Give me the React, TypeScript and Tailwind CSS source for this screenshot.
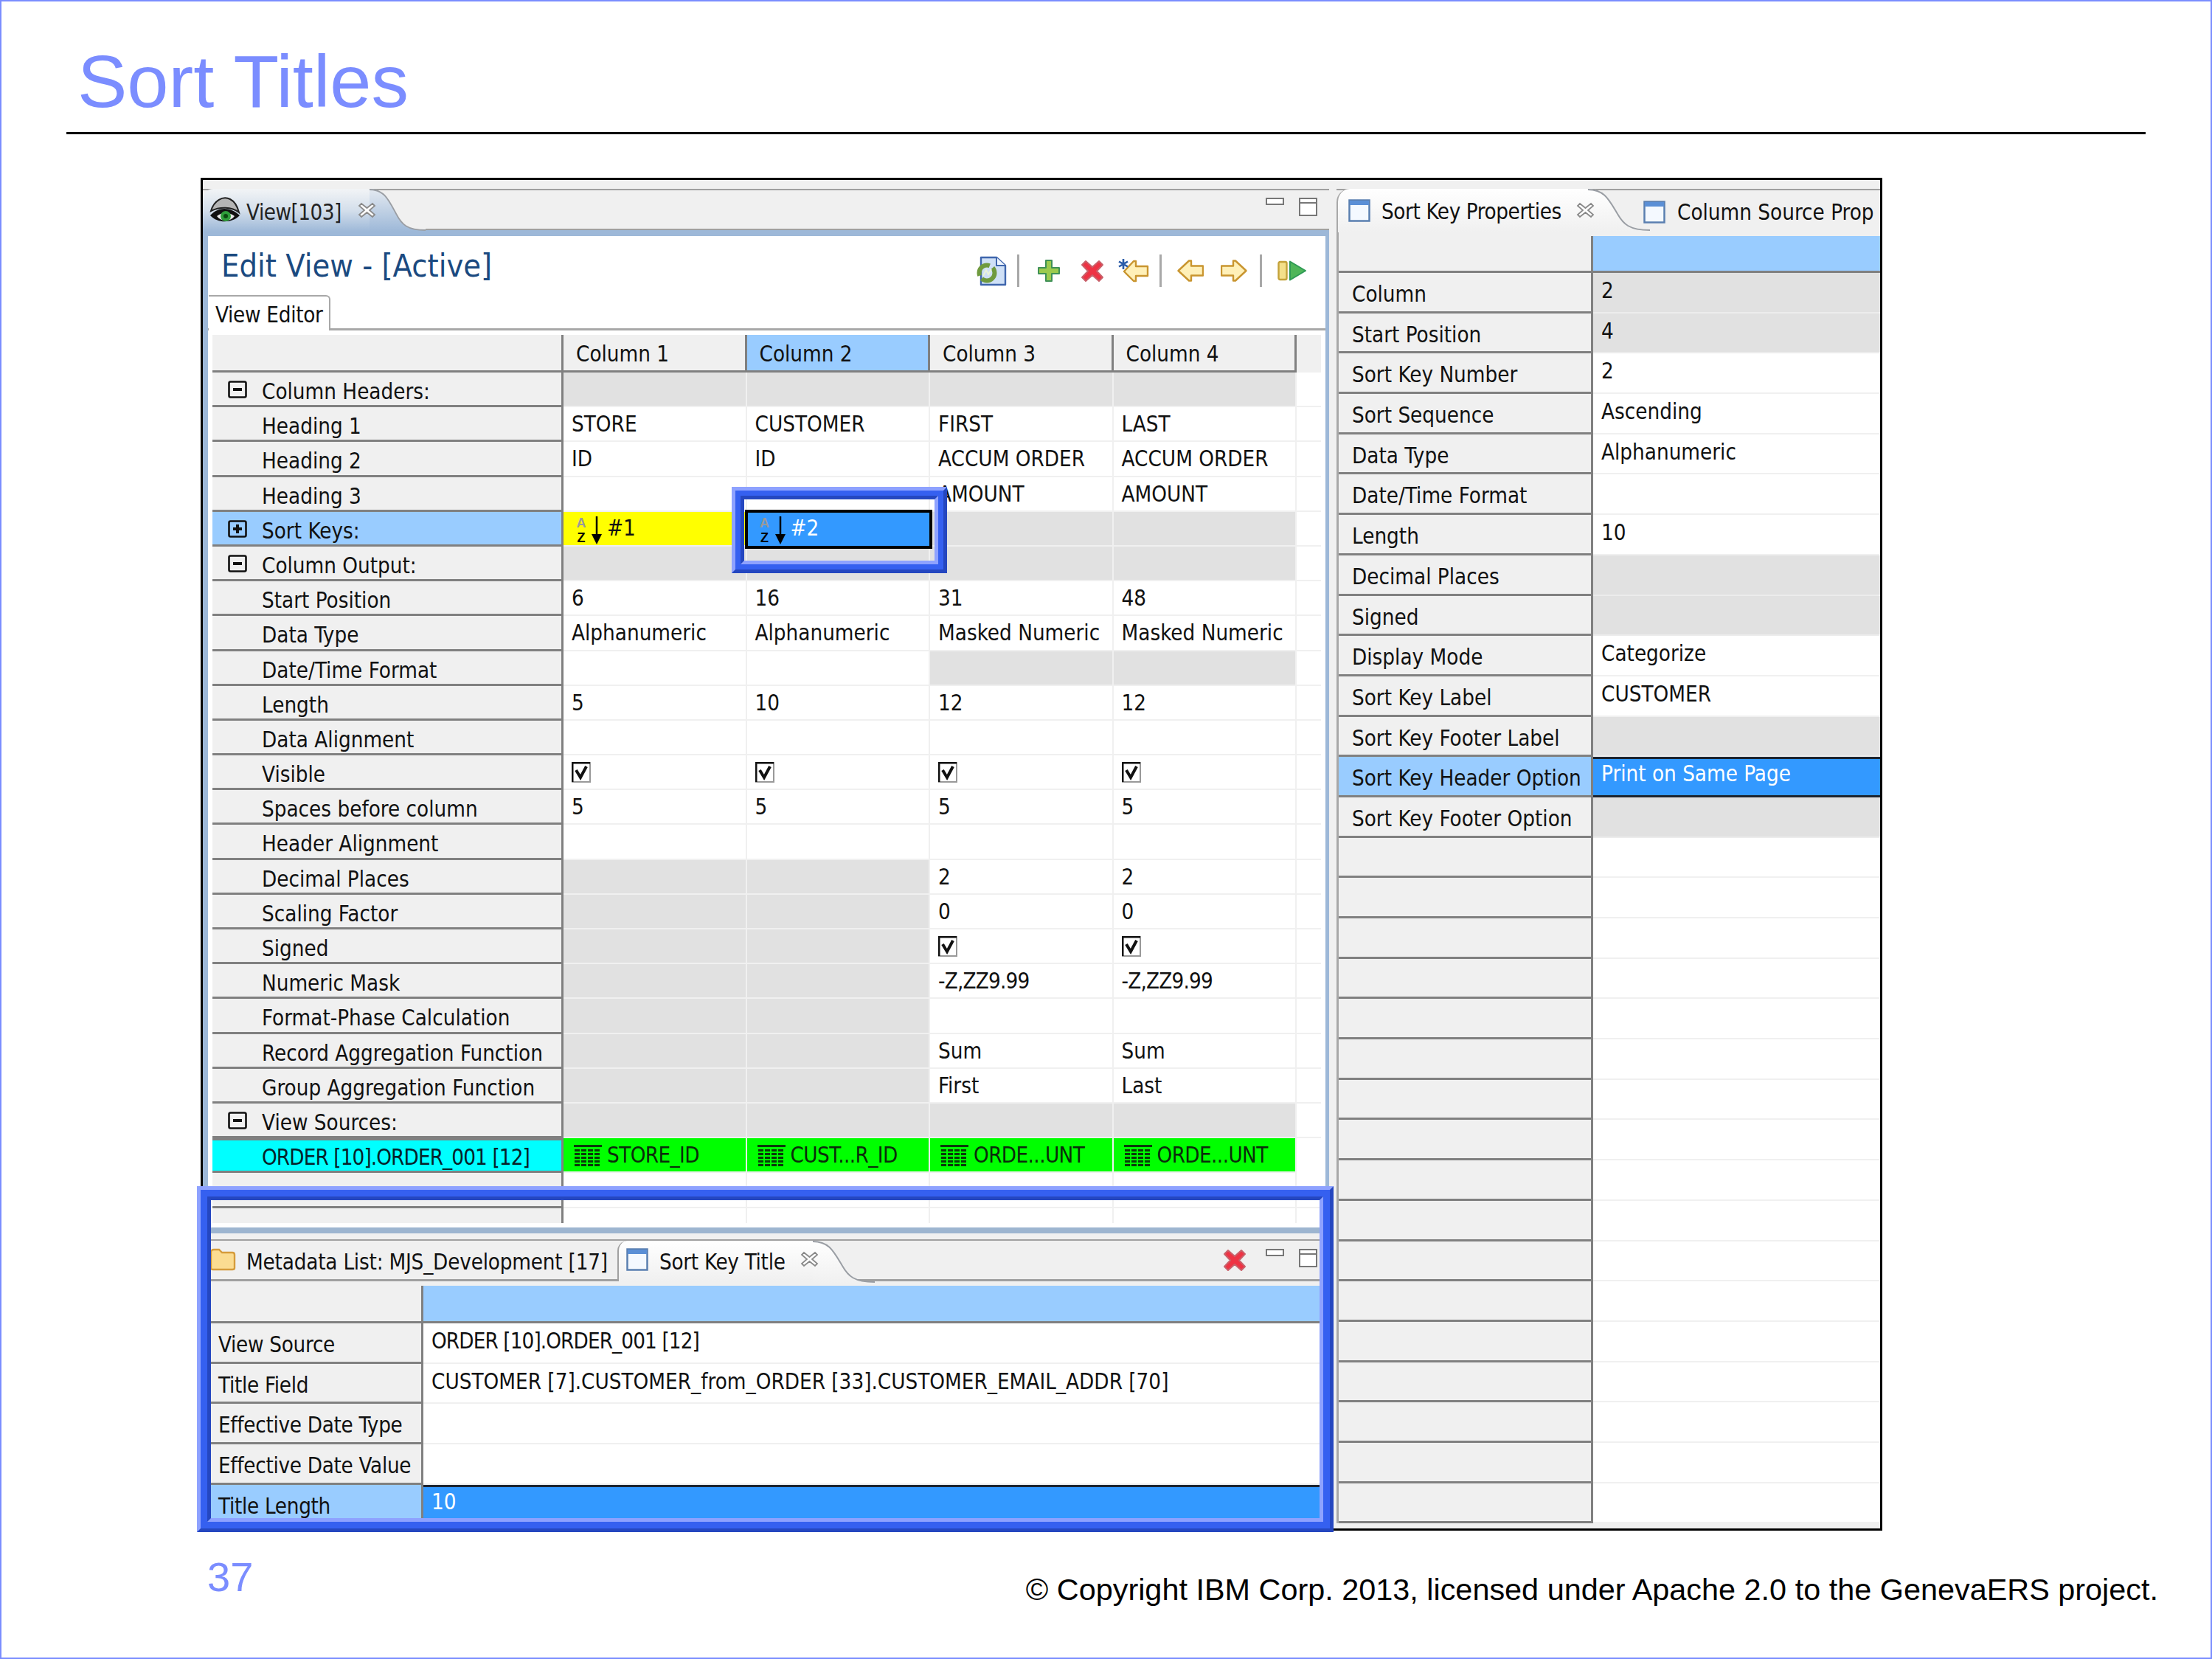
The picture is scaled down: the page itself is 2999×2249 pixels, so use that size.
import React from "react";

const GRAY = "~";
const CHECK = "[x]";

type RowData = { label: string; tree?: "minus" | "plus"; cells: string[] };

const rows: RowData[] = [
  { label: "Column Headers:", tree: "minus", cells: [GRAY, GRAY, GRAY, GRAY] },
  { label: "Heading 1", cells: ["STORE", "CUSTOMER", "FIRST", "LAST"] },
  { label: "Heading 2", cells: ["ID", "ID", "ACCUM ORDER", "ACCUM ORDER"] },
  { label: "Heading 3", cells: ["", "", "AMOUNT", "AMOUNT"] },
  { label: "Sort Keys:", tree: "plus", cells: ["#1", "#2", GRAY, GRAY] },
  { label: "Column Output:", tree: "minus", cells: [GRAY, GRAY, GRAY, GRAY] },
  { label: "Start Position", cells: ["6", "16", "31", "48"] },
  { label: "Data Type", cells: ["Alphanumeric", "Alphanumeric", "Masked Numeric", "Masked Numeric"] },
  { label: "Date/Time Format", cells: ["", "", GRAY, GRAY] },
  { label: "Length", cells: ["5", "10", "12", "12"] },
  { label: "Data Alignment", cells: ["", "", "", ""] },
  { label: "Visible", cells: [CHECK, CHECK, CHECK, CHECK] },
  { label: "Spaces before column", cells: ["5", "5", "5", "5"] },
  { label: "Header Alignment", cells: ["", "", "", ""] },
  { label: "Decimal Places", cells: [GRAY, GRAY, "2", "2"] },
  { label: "Scaling Factor", cells: [GRAY, GRAY, "0", "0"] },
  { label: "Signed", cells: [GRAY, GRAY, CHECK, CHECK] },
  { label: "Numeric Mask", cells: [GRAY, GRAY, "-Z,ZZ9.99", "-Z,ZZ9.99"] },
  { label: "Format-Phase Calculation", cells: [GRAY, GRAY, "", ""] },
  { label: "Record Aggregation Function", cells: [GRAY, GRAY, "Sum", "Sum"] },
  { label: "Group Aggregation Function", cells: [GRAY, GRAY, "First", "Last"] },
  { label: "View Sources:", tree: "minus", cells: [GRAY, GRAY, GRAY, GRAY] },
];

const sourceCells = ["STORE_ID", "CUST...R_ID", "ORDE...UNT", "ORDE...UNT"];

const sortKeyProps: [string, string][] = [
  ["Column", "~2"],
  ["Start Position", "~4"],
  ["Sort Key Number", "2"],
  ["Sort Sequence", "Ascending"],
  ["Data Type", "Alphanumeric"],
  ["Date/Time Format", ""],
  ["Length", "10"],
  ["Decimal Places", "~"],
  ["Signed", "~"],
  ["Display Mode", "Categorize"],
  ["Sort Key Label", "CUSTOMER"],
  ["Sort Key Footer Label", "~"],
  ["Sort Key Header Option", "*Print on Same Page"],
  ["Sort Key Footer Option", "~"],
  ...[...Array(17)].map((): [string, string] => ["", ""]),
];

const titleProps: [string, string][] = [
  ["View Source", "ORDER [10].ORDER_001 [12]"],
  ["Title Field", "CUSTOMER [7].CUSTOMER_from_ORDER [33].CUSTOMER_EMAIL_ADDR [70]"],
  ["Effective Date Type", ""],
  ["Effective Date Value", ""],
  ["Title Length", "*10"],
];

const TreeIcon = ({ kind }: { kind: "minus" | "plus" }) => (
  <svg width="26" height="24" viewBox="0 0 26 24" className="ml-[21px] mr-[20px] shrink-0">
    <rect x="1.5" y="1.5" width="23" height="21" rx="2" fill="none" stroke="#111" strokeWidth="2.6" />
    <rect x="7" y="10" width="12" height="4" fill="#111" />
    {kind === "plus" && <rect x="11" y="6" width="4" height="12" fill="#111" />}
  </svg>
);

const Checkbox = () => (
  <svg width="26" height="28" viewBox="0 0 26 28" className="mt-[1px]">
    <rect x="1" y="1" width="24" height="26" fill="#fff" stroke="#999" strokeWidth="2" />
    <path d="M1 27V1H25" fill="none" stroke="#111" strokeWidth="3" />
    <path d="M6 11 L12 21 L20 6" fill="none" stroke="#111" strokeWidth="4" />
  </svg>
);

const SortIcon = () => (
  <span className="flex items-start shrink-0 -mt-[2px]">
    <span className="flex flex-col w-[20px] items-center font-['Liberation_Sans',sans-serif] font-bold text-[18px] leading-[20.2px] [font-stretch:normal]">
      <span className="text-[#9a9a9a]">A</span>
      <span className="text-black">Z</span>
    </span>
    <svg width="16" height="38" viewBox="0 0 16 38" className="ml-[3px] mt-[1px] shrink-0">
      <path d="M8 0V28" stroke="#000" strokeWidth="2.5" />
      <path d="M1 24H15L8 38Z" fill="#000" />
    </svg>
  </span>
);

const TableIcon = () => (
  <svg width="38" height="30" viewBox="0 0 38 30" className="shrink-0">
    <rect x="0" y="0" width="38" height="3" fill="#0a3a0a" />
    {[6, 11, 16, 21, 26].map((y) => (
      <path key={y} d={`M1 ${y + 1.5}H37`} stroke="#0a3a0a" strokeWidth="3" strokeDasharray="7 2" />
    ))}
  </svg>
);

const EyeIcon = () => (
  <svg width="42" height="42" viewBox="0 0 42 42" className="shrink-0">
    <path d="M2 22 C6 8 18 1 28 6 C34 9 38 16 40 24 C30 16 14 16 2 22Z" fill="#b5b5b5" stroke="#222" strokeWidth="2" />
    <path d="M1 28 C12 16 28 16 41 28 C32 38 12 40 1 28Z" fill="#111" />
    <path d="M10 29 C18 23 26 23 34 29 C28 37 16 37 10 29Z" fill="#e8e8e8" />
    <circle cx="22" cy="29" r="7" fill="#2f9e3a" />
    <circle cx="22" cy="29" r="3" fill="#0c4a12" />
  </svg>
);

const CloseIcon = () => (
  <svg width="25" height="24" viewBox="0 0 25 24" className="shrink-0">
    <path d="M5 3 L12.5 9 L20 3 L23 6 L16 12 L23 18 L20 21 L12.5 15 L5 21 L2 18 L9 12 L2 6Z" fill="#fff" stroke="#8a8a8a" strokeWidth="1.8" />
  </svg>
);

const WindowIcon = () => (
  <svg width="30" height="31" viewBox="0 0 30 31" className="shrink-0">
    <rect x="1.5" y="1.5" width="27" height="28" fill="#f4f9ff" stroke="#5a7fb0" strokeWidth="2.5" />
    <rect x="2" y="2" width="26" height="6" fill="#5a8fd6" />
  </svg>
);

const FolderIcon = () => (
  <svg width="36" height="31" viewBox="0 0 36 31" className="shrink-0">
    <path d="M2 6 Q2 2 6 2 H13 L17 6 H31 Q34 6 34 9 V27 Q34 29 31 29 H5 Q2 29 2 27Z" fill="#fbdc91" stroke="#d59c3c" strokeWidth="2.4" />
  </svg>
);

const MinMax = () => (
  <div className="flex items-start gap-[20px]">
    <svg width="25" height="10" viewBox="0 0 25 10">
      <rect x="1" y="1" width="23" height="8" fill="#fff" stroke="#777" strokeWidth="2" />
    </svg>
    <svg width="25" height="25" viewBox="0 0 25 25">
      <rect x="1" y="1" width="23" height="23" fill="#fff" stroke="#777" strokeWidth="2" />
      <path d="M1 7H24" stroke="#777" strokeWidth="2" />
    </svg>
  </div>
);

const RedX = () => (
  <svg width="32" height="31" viewBox="0 0 32 31" className="shrink-0">
    <path d="M7 2 L16 10 L25 2 L30 7 L22 15.5 L30 24 L25 29 L16 21 L7 29 L2 24 L10 15.5 L2 7Z" fill="#ee3344" stroke="#c9606a" strokeWidth="2" strokeLinejoin="round" />
  </svg>
);

const PlusIcon = () => (
  <svg width="30" height="30" viewBox="0 0 30 30" className="shrink-0">
    <path d="M11 1H19V11H29V19H19V29H11V19H1V11H11Z" fill="#9ccb4e" stroke="#3f9157" strokeWidth="2" strokeLinejoin="round" />
  </svg>
);

const YellowLeft = () => (
  <svg width="36" height="30" viewBox="0 0 36 30" className="shrink-0">
    <path d="M1.5 15 L16 1.5 H19 V8.5 H35 V21.5 H19 V28.5 H16Z" fill="#fff0b8" stroke="#c9952f" strokeWidth="2.4" strokeLinejoin="round" />
  </svg>
);

const YellowRight = () => (
  <svg width="36" height="30" viewBox="0 0 36 30" className="shrink-0">
    <path d="M34.5 15 L20 1.5 H17 V8.5 H1 V21.5 H17 V28.5 H20Z" fill="#fff0b8" stroke="#c9952f" strokeWidth="2.4" strokeLinejoin="round" />
  </svg>
);

const StarArrow = () => (
  <svg width="42" height="32" viewBox="0 0 42 32" className="shrink-0">
    <path d="M8 17 L21 3 H24 V10 H40 V23 H24 V30 H21Z" fill="#fff0b8" stroke="#c9952f" strokeWidth="2.4" strokeLinejoin="round" />
    <path d="M7 0V14M1 3.5L13 10.5M13 3.5L1 10.5" stroke="#2b5ca8" strokeWidth="2.6" />
  </svg>
);

const RunIcon = () => (
  <svg width="39" height="28" viewBox="0 0 39 28" className="shrink-0">
    <rect x="1.5" y="2" width="11" height="24" rx="2" fill="#f4e08a" stroke="#c4a23a" strokeWidth="2.4" />
    <path d="M17 1.5 L38 14 L17 26.5Z" fill="#4fb65a" stroke="#2f9a55" strokeWidth="2" strokeLinejoin="round" />
  </svg>
);

const DocSync = () => (
  <svg width="41" height="41" viewBox="0 0 41 41" className="shrink-0">
    <path d="M6 2 H27 L39 13 V39 H6Z" fill="#cfe0f6" stroke="#3f66ad" strokeWidth="2.4" strokeLinejoin="round" />
    <path d="M27 2 V13 H39" fill="#edf4fd" stroke="#3f66ad" strokeWidth="2" />
    <circle cx="14" cy="23" r="10.5" fill="none" stroke="#6f9a3e" strokeWidth="6" strokeDasharray="24 5" />
    <path d="M9 27 L13 19 L16 25 L20 18" fill="none" stroke="#eaf4d8" strokeWidth="2" />
  </svg>
);

const ToolSep = () => <div className="w-[3px] h-[44px] bg-[#a8a8a8] shrink-0" />;

const TabCurve = ({ id, from, to, width }: { id: string; from: string; to: string; width: number }) => (
  <svg width={width} height="58" viewBox="0 0 84 58" preserveAspectRatio="none" className="shrink-0">
    <defs>
      <linearGradient id={id} x1="0" y1="0" x2="0" y2="1">
        <stop offset="0" stopColor={from} />
        <stop offset="1" stopColor={to} />
      </linearGradient>
    </defs>
    <path d="M0 0 C22 1 28 14 40 34 C48 48 56 56 84 56 L84 58 L0 58Z" fill={`url(#${id})`} stroke="none" />
    <path d="M0 1 C22 1 28 14 40 34 C48 48 56 56 84 56" fill="none" stroke="#9a9ea4" strokeWidth="2" />
  </svg>
);

const Frame = ({ className, mid }: { className: string; mid: string }) => (
  <div className={`absolute z-20 border-[5px] border-t-[#8ea2ff] border-l-[#8ea2ff] border-r-[#2547c0] border-b-[#2547c0] ${className}`}>
    <div className={`h-full border-[#3560f0] ${mid}`}>
      <div className="h-full border-[5px] border-t-[#2547c0] border-l-[#2547c0] border-r-[#8ea2ff] border-b-[#8ea2ff]" />
    </div>
  </div>
);

const GridRow = ({ row }: { row: RowData }) => {
  const selected = row.tree === "plus";
  return (
    <div className="flex h-[47.2px]">
      <div
        className={`w-[476px] shrink-0 flex items-start pt-[11px] leading-[30px] whitespace-nowrap border-b-[3px] border-r-[3px] border-[#808080] text-[#111] ${
          selected ? "bg-[#99ccff]" : "bg-[#f0f0f0]"
        }`}
      >
        {row.tree ? <TreeIcon kind={row.tree} /> : <span className="w-[67px] shrink-0" />}
        <span>{row.label}</span>
      </div>
      {row.cells.map((c, i) => (
        <GridCell key={i} value={c} />
      ))}
      <div className="w-[33px] shrink-0 border-b-2 border-[#f0f0f0]" />
    </div>
  );
};

const GridCell = ({ value }: { value: string }) => {
  if (value === "#1") {
    return (
      <div className="w-[248.5px] shrink-0 h-[47.2px] bg-[#ffff00] border-b-2 border-[#f0f0f0] flex items-start pl-[14px] pt-[7px] gap-[6px] leading-[30px] text-[#111]">
        <SortIcon />
        <span>#1</span>
      </div>
    );
  }
  if (value === "#2") {
    return (
      <div className="relative z-10 w-[248.5px] shrink-0 h-[47.2px] bg-[#3399ff] outline-[4px] -outline-offset-1 outline-black flex items-start pl-[14px] pt-[7px] gap-[6px] leading-[30px] text-white">
        <SortIcon />
        <span>#2</span>
      </div>
    );
  }
  const gray = value === GRAY;
  const tight = value.startsWith("-Z");
  return (
    <div
      className={`w-[248.5px] shrink-0 pl-[11px] pt-[8px] leading-[30px] whitespace-nowrap border-b-2 border-r-2 border-[#f0f0f0] text-[#111] ${
        gray ? "bg-[#e1e1e1]" : "bg-white"
      } ${tight ? "tracking-[-0.8px]" : ""}`}
    >
      {value === CHECK ? <Checkbox /> : gray ? "" : value}
    </div>
  );
};

const PropRow = ({ label, value, labelW }: { label: string; value: string; labelW: string }) => {
  const gray = value.startsWith("~");
  const sel = value.startsWith("*");
  const tight = value.startsWith("ORDER");
  return (
    <div className="flex h-[54.7px] shrink-0">
      <div
        className={`${labelW} shrink-0 pt-[12px] leading-[34px] border-b-[3px] border-r-[3px] border-[#808080] text-[#111] whitespace-nowrap ${
          sel ? "bg-[#99ccff]" : "bg-[#f0f0f0]"
        }`}
      >
        {label}
      </div>
      <div
        className={`flex-1 pl-[11px] leading-[34px] whitespace-nowrap ${tight ? "tracking-[-0.9px]" : ""} ${
          sel
            ? "bg-[#3399ff] text-white border-y-[3px] border-[#1c2430] pt-[3px]"
            : gray
              ? "bg-[#e1e1e1] text-[#111] border-b-2 border-[#ececec] pt-[7px]"
              : "bg-white text-[#111] border-b-2 border-[#f0f0f0] pt-[7px]"
        }`}
      >
        {value.replace(/^[~*]/, "")}
      </div>
    </div>
  );
};

export default function App() {
  return (
    <div className="w-[2999px] h-[2249px] bg-white border-2 border-[#7b8dff] font-['Liberation_Sans',sans-serif] flex flex-col overflow-hidden">
      <h1 className="mt-[58px] ml-[103px] text-[101px] leading-[100px] text-[#7b8dff] font-normal">Sort Titles</h1>
      <div className="mt-[19px] ml-[88px] w-[2819px] h-[3px] bg-black shrink-0" />

      {/* eclipse window grab */}
      <div className="relative mt-[59px] ml-[270px] w-[2280px] h-[1834px] shrink-0 border-[3px] border-black flex bg-[#f0f0f0] font-['DejaVu_Sans',sans-serif] [font-stretch:condensed] text-[29.3px]">
        {/* left stack */}
        <div className="w-[1527px] shrink-0 flex flex-col">
          <div className="h-[12px] shrink-0" />
          <div className="h-[56px] shrink-0 flex border-t-2 border-[#a0a0a0] relative">
            <div className="flex items-start -mt-[2px]">
              <div className="w-[226px] h-[58px] rounded-tl-[14px] bg-gradient-to-b from-[#f2f4f6] via-[#d4dfeb] to-[#9db8d8] flex items-start pl-[9px] pt-[8px]">
                <EyeIcon />
                <span className="ml-[8px] mt-[9px] leading-[30px] text-[#222] tracking-[-0.5px]">View[103]</span>
                <span className="relative z-10 ml-[22px] mt-[9px]"><CloseIcon /></span>
              </div>
              <TabCurve id="tabView" from="#e4eaf1" to="#9db8d8" width={76} />
            </div>
            <div className="flex-1 self-end h-[2px] bg-[#a0a0a0]" />
            <div className="absolute right-[16px] top-[10px]"><MinMax /></div>
          </div>
          <div className="h-[8px] shrink-0 bg-[#9db8d8]" />

          <div className="h-[1338px] shrink-0 bg-white border-x-[7px] border-x-[#9db8d8] border-r-[5px] flex flex-col overflow-hidden">
            <div className="h-[80px] shrink-0 flex items-start">
              <div className="ml-[18px] mt-[17px] text-[43px] leading-[46px] text-[#1b4a80]">Edit View - [Active]</div>
              <div className="ml-auto mr-[26px] mt-[25px] flex items-center">
                <DocSync />
                <span className="ml-[14px]"><ToolSep /></span>
                <span className="ml-[25px]"><PlusIcon /></span>
                <span className="ml-[28px]"><RedX /></span>
                <span className="ml-[19px]"><StarArrow /></span>
                <span className="ml-[14px]"><ToolSep /></span>
                <span className="ml-[21px]"><YellowLeft /></span>
                <span className="ml-[23px]"><YellowRight /></span>
                <span className="ml-[17px]"><ToolSep /></span>
                <span className="ml-[21px]"><RunIcon /></span>
              </div>
            </div>
            <div className="h-[48px] shrink-0 flex border-b-[3px] border-[#a8a8a8]">
              <div className="ml-[1px] w-[165px] h-[48px] rounded-tr-[6px] border-t-2 border-r-2 border-[#a8a8a8] bg-white pl-[9px] pt-[8px] leading-[34px] text-[#111] whitespace-nowrap tracking-[-0.3px]">View Editor</div>
            </div>
            <div className="h-[6px] shrink-0" />
            <div className="ml-[6px] flex flex-col">
              <div className="flex h-[51px] shrink-0">
                <div className="w-[476px] shrink-0 bg-[#f0f0f0] border-b-[3px] border-r-[3px] border-[#808080]" />
                {["Column 1", "Column 2", "Column 3", "Column 4"].map((c) => (
                  <div
                    key={c}
                    className={`w-[248.5px] shrink-0 pl-[17px] pt-[11px] leading-[30px] text-[#111] border-b-[3px] border-r-[3px] border-[#808080] ${
                      c === "Column 2" ? "bg-[#99ccff]" : "bg-[#f0f0f0]"
                    }`}
                  >
                    {c}
                  </div>
                ))}
                <div className="w-[33px] shrink-0 bg-[#f0f0f0]" />
              </div>
              {rows.map((r) => (
                <GridRow key={r.label} row={r} />
              ))}
              {/* view source row */}
              <div className="flex h-[47.2px] shrink-0">
                <div className="w-[476px] shrink-0 bg-[#00ffff] border-b-[3px] border-t-[3px] border-r-[3px] border-t-[#808080] border-[#808080] pl-[67px] pt-[8px] leading-[30px] text-[#06222a] tracking-[-0.9px] whitespace-nowrap">ORDER [10].ORDER_001 [12]</div>
                {sourceCells.map((c, i) => (
                  <div key={i} className="w-[248.5px] shrink-0 bg-[#00ff00] border-b-2 border-r-2 border-[#f0f0f0] flex items-start pl-[14px] pt-[9px] gap-[7px] leading-[28px] text-[#0b2b0b] whitespace-nowrap tracking-[-0.6px]">
                    <TableIcon />
                    <span>{c}</span>
                  </div>
                ))}
              </div>
              <div className="flex h-[47.2px] shrink-0">
                <div className="w-[476px] shrink-0 bg-[#f0f0f0] border-b-[3px] border-r-[3px] border-[#808080]" />
                {[0, 1, 2, 3, 4].map((i) => (
                  <div key={i} className="w-[248.5px] shrink-0 border-b-2 border-r-2 border-[#f0f0f0]" />
                ))}
              </div>
              <div className="flex h-[20px] shrink-0">
                <div className="w-[476px] shrink-0 bg-[#f0f0f0] border-r-[3px] border-[#808080]" />
                {[0, 1, 2, 3, 4].map((i) => (
                  <div key={i} className="w-[248.5px] shrink-0 border-r-2 border-[#f0f0f0]" />
                ))}
              </div>
            </div>
          </div>

          <div className="h-[6px] shrink-0 bg-white" />
          <div className="h-[8px] shrink-0 bg-[#9db5d0]" />
          <div className="h-[8px] shrink-0" />

          {/* bottom view */}
          <div className="h-[57px] shrink-0 relative flex border-t-2 border-b-[3px] border-[#a0a0a0]">
            <div className="flex items-start w-[562px] shrink-0 pl-[9px] pt-[10px] text-[#111]">
              <FolderIcon />
              <span className="ml-[14px] mt-[2px] leading-[34px] whitespace-nowrap tracking-[-0.2px]">Metadata List: MJS_Development [17]</span>
            </div>
            <div className="flex items-start">
              <div className="w-[265px] h-[55px] rounded-tl-[14px] bg-gradient-to-b from-white to-[#f0f0f0] border-l-2 border-[#a0a0a0] flex items-start pl-[10px] pt-[10px] text-[#111]">
                <WindowIcon />
                <span className="ml-[15px] mt-[2px] leading-[34px] whitespace-nowrap tracking-[-0.3px]">Sort Key Title</span>
                <span className="relative z-10 ml-[20px] mt-[3px]"><CloseIcon /></span>
              </div>
              <TabCurve id="tabTitle" from="#ffffff" to="#f0f0f0" width={84} />
            </div>
            <div className="absolute right-[16px] top-[11px] flex items-start gap-[26px]">
              <RedX />
              <MinMax />
            </div>
          </div>
          <div className="h-[6px] shrink-0" />
          <div className="ml-[9px] mr-[5px] flex flex-col">
            <div className="flex h-[51px] shrink-0">
              <div className="w-[290px] shrink-0 bg-[#f0f0f0] border-b-[3px] border-r-[3px] border-[#808080]" />
              <div className="flex-1 bg-[#99ccff] border-b-[3px] border-[#808080]" />
            </div>
            {titleProps.map(([l, v]) => (
              <PropRow key={l} label={l} value={v} labelW="w-[290px] pl-[12px] tracking-[-0.3px]" />
            ))}
          </div>
        </div>

        {/* right stack */}
        <div className="ml-[10px] flex-1 min-w-0 flex flex-col overflow-hidden">
          <div className="h-[12px] shrink-0" />
          <div className="h-[57px] shrink-0 flex items-start border-t-2 border-[#a0a0a0] relative">
            <div className="flex items-start -mt-[2px]">
              <div className="w-[341px] h-[59px] rounded-tl-[18px] bg-gradient-to-b from-white to-[#f0f0f0] flex items-start pl-[14px] pt-[14px] text-[#111] border-l-2 border-[#a8a8a8]">
                <WindowIcon />
                <span className="ml-[15px] mt-[2px] leading-[30px] whitespace-nowrap tracking-[-0.4px]">Sort Key Properties</span>
                <span className="relative z-10 ml-[20px] mt-[3px]"><CloseIcon /></span>
              </div>
              <TabCurve id="tabProps" from="#ffffff" to="#f0f0f0" width={84} />
            </div>
            <div className="flex items-start pt-[14px] -ml-[9px] text-[#111]">
              <WindowIcon />
              <span className="ml-[16px] mt-[1px] leading-[30px] whitespace-nowrap">Column Source Prop</span>
            </div>
          </div>
          <div className="h-[7px] shrink-0 border-l-[3px] border-[#a8a8a8]" />
          <div className="flex flex-col border-l-[3px] border-[#a8a8a8]">
            <div className="flex h-[50px] shrink-0">
              <div className="w-[345px] shrink-0 border-b-[3px] border-r-[3px] border-[#808080]" />
              <div className="flex-1 bg-[#99ccff] border-b-[3px] border-[#808080]" />
            </div>
            {sortKeyProps.map(([l, v], i) => (
              <PropRow key={i} label={l} value={v} labelW="w-[345px] pl-[18px]" />
            ))}
          </div>
        </div>

        <Frame className="left-[717px] top-[416px] w-[292px] h-[117px]" mid="border-[7px]" />
        <Frame className="-left-[8px] top-[1364px] w-[1541px] h-[469px]" mid="border-[9px]" />
      </div>

      <div className="flex items-start justify-between pl-[279px] pr-[71px] mt-[35px]">
        <span className="text-[56px] leading-[56px] text-[#7b8dff]">37</span>
        <span className="mt-[23px] text-[41.4px] leading-[44px] text-black">© Copyright IBM Corp. 2013, licensed under Apache 2.0 to the GenevaERS project.</span>
      </div>
    </div>
  );
}
